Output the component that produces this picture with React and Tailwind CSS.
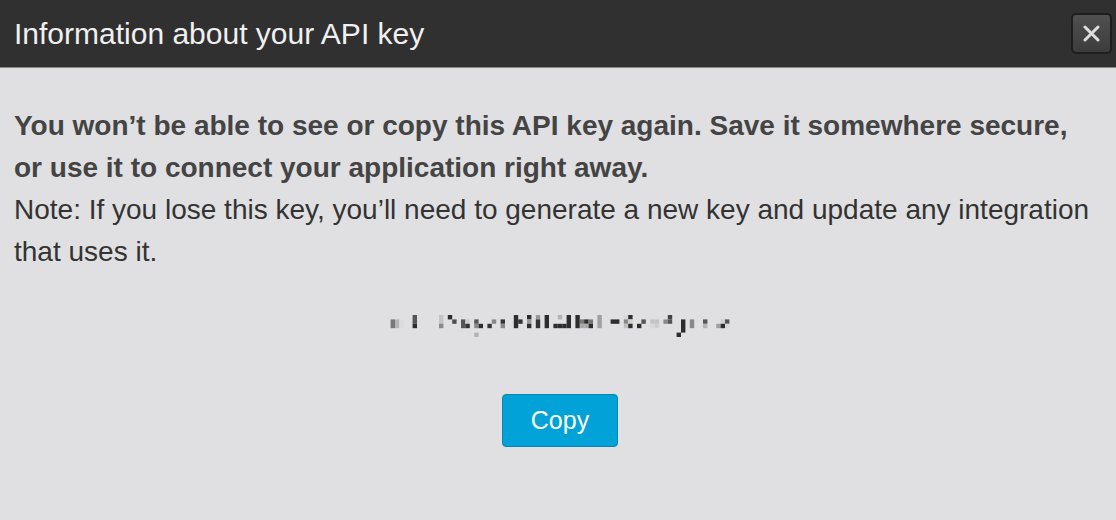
import React, { useState } from 'react';

// [column, row, height, color]
const KEY_BLOCKS = [
  [0, 1, 2, '#777777'], [1, 1, 2, '#b4b4b4'], [2, 1, 2, '#dcdcdc'],
  [5, 0, 2, '#555555'], [5, 2, 1, '#2d2d2d'],
  [11, 0, 2, '#c4c4c4'], [11, 2, 1, '#888888'],
  [13, 0, 1, '#2d2d2d'], [14, 1, 1, '#4f4f4f'],
  [16, 1, 2, '#555555'], [17, 1, 1, '#d0d0d0'], [17, 2, 1, '#333333'],
  [19, 1, 1, '#555555'], [19, 2, 1, '#888888'], [19, 4, 1, '#b4b4b4'], [20, 2, 1, '#2d2d2d'],
  [22, 2, 1, '#333333'], [23, 1, 1, '#888888'],
  [25, 1, 1, '#333333'], [25, 2, 1, '#888888'],
  [28, 0, 3, '#2d2d2d'], [29, 1, 1, '#333333'],
  [31, 0, 1, '#2d2d2d'], [31, 1, 1, '#999999'], [31, 2, 1, '#2d2d2d'],
  [33, 0, 1, '#999999'], [33, 1, 2, '#333333'],
  [35, 0, 3, '#2d2d2d'],
  [37, 2, 1, '#2d2d2d'], [38, 0, 1, '#b4b4b4'], [38, 2, 1, '#2d2d2d'], [39, 2, 1, '#2d2d2d'], [40, 0, 3, '#2d2d2d'],
  [42, 0, 3, '#2d2d2d'], [43, 1, 1, '#777777'], [43, 2, 1, '#aaaaaa'],
  [44, 1, 1, '#2d2d2d'], [44, 2, 1, '#aaaaaa'], [45, 1, 1, '#777777'], [45, 2, 1, '#2d2d2d'],
  [47, 0, 3, '#a0a0a0'],
  [50, 1, 1, '#2d2d2d'], [51, 1, 1, '#2d2d2d'],
  [53, 0, 1, '#d8d8d8'], [53, 1, 1, '#888888'], [53, 2, 1, '#c0c0c0'],
  [54, 0, 1, '#2d2d2d'], [54, 1, 1, '#d0d0d0'], [54, 2, 1, '#2d2d2d'],
  [56, 2, 1, '#2d2d2d'], [57, 1, 1, '#555555'],
  [59, 1, 1, '#c4c4c4'], [59, 2, 1, '#d8d8d8'], [60, 1, 1, '#c4c4c4'], [60, 2, 1, '#cfcfcf'],
  [62, 1, 1, '#888888'], [63, 0, 1, '#444444'], [63, 1, 1, '#555555'],
  [65, 4, 1, '#2d2d2d'], [66, 1, 3, '#2d2d2d'],
  [68, 1, 2, '#888888'],
  [71, 1, 1, '#555555'], [71, 2, 1, '#b4b4b4'],
  [74, 2, 1, '#a0a0a0'], [75, 1, 1, '#d0d0d0'], [75, 2, 1, '#2d2d2d'],
  [76, 1, 1, '#555555'], [76, 2, 1, '#d8d8d8'],
];

const MaskedKey = () => (
  <svg viewBox="0 0 77 5" className="w-[340px] h-[22px]" role="img" aria-label="Hidden API key">
    {KEY_BLOCKS.map(([x, y, height, fill]) => (
      <rect key={`${x}-${y}`} x={x} y={y} width="1" height={height} fill={fill} />
    ))}
  </svg>
);

const App = () => {
  const [open, setOpen] = useState(true);
  const [copied, setCopied] = useState(false);

  if (!open) return null;

  return (
    <div
      role="dialog"
      aria-labelledby="dialog-title"
      className="min-h-screen flex flex-col bg-[#e0e0e2] font-['Liberation_Sans',Arial,sans-serif]"
    >
      {/* Header */}
      <header className="flex items-center justify-between bg-[#303030] border-b border-[#8a8a8a] pl-3.5 pr-1 py-3">
        <h1 id="dialog-title" className="text-[30px] leading-[43px] text-[#f0f0f0]">
          Information about your API key
        </h1>
        <button
          onClick={() => setOpen(false)}
          className="w-[41px] h-[41px] flex items-center justify-center rounded-[5px] border-2 border-[#1e1e1e] bg-linear-to-b from-[#505050] to-[#3c3c3c]"
          title="Close"
        >
          <svg viewBox="0 0 17 17" className="w-[17px] h-[17px]" stroke="#dedede" strokeWidth="3" strokeLinecap="round">
            <path d="M2 2L15 15M15 2L2 15" />
          </svg>
        </button>
      </header>

      {/* Body */}
      <main className="flex-1 px-3 pt-[37px] pb-18 flex flex-col">
        <div className="px-0.5 text-[28px] leading-[42px] text-[#333333]">
          <p className="font-bold text-[#444444]">
            You won’t be able to see or copy this API key again. Save it somewhere secure, or use it to connect your application right away.
          </p>
          <p>
            Note: If you lose this key, you’ll need to generate a new key and update any integration that uses it.
          </p>
        </div>

        <div className="flex flex-col items-center gap-[57px] pl-1 mt-[42px]">
          <MaskedKey />
          <button
            onClick={() => setCopied(true)}
            aria-pressed={copied}
            className="px-7 py-2 rounded-[4px] border border-[#0586b3] bg-[#00a2d8] text-[25px] leading-[35px] text-white"
          >
            Copy
          </button>
        </div>
      </main>
    </div>
  );
};

export default App;
